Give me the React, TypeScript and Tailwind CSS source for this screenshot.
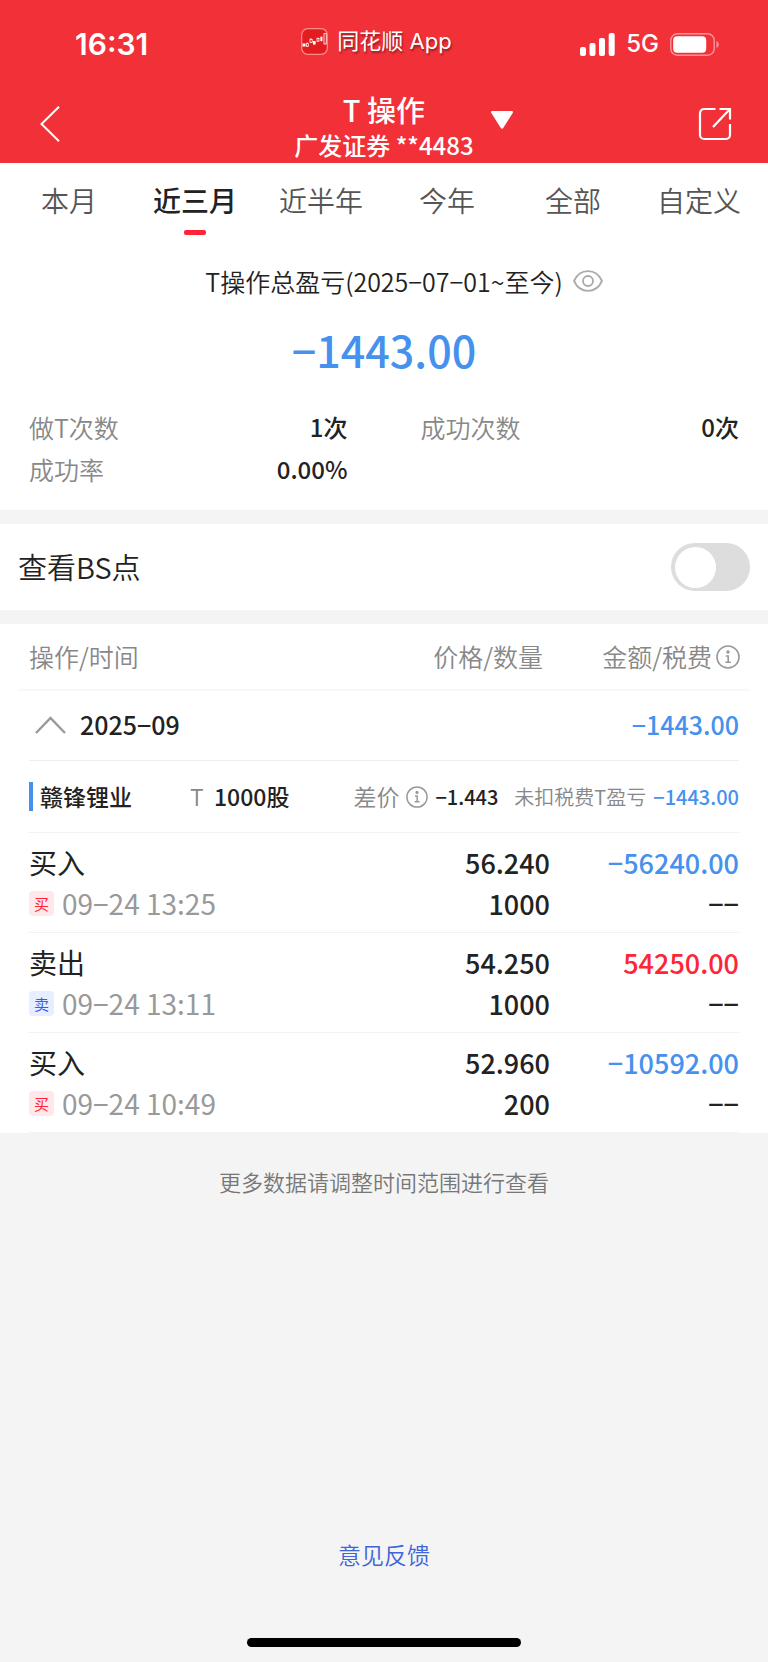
import type React from "react";
import { useState } from "react";

type Trade = {
  side: "buy" | "sell";
  time: string;
  price: string;
  amount: string;
  total: string;
  fee: string;
};

const TABS = ["本月", "近三月", "近半年", "今年", "全部", "自定义"];

const STATS = [
  { label: "做T次数", value: "1次" },
  { label: "成功次数", value: "0次" },
  { label: "成功率", value: "0.00%" },
];

const TRADES: Trade[] = [
  { side: "buy", time: "09−24 13:25", price: "56.240", amount: "1000", total: "−56240.00", fee: "−−" },
  { side: "sell", time: "09−24 13:11", price: "54.250", amount: "1000", total: "54250.00", fee: "−−" },
  { side: "buy", time: "09−24 10:49", price: "52.960", amount: "200", total: "−10592.00", fee: "−−" },
];

const InfoIcon: React.FC<{ className: string }> = ({ className }) => (
  <svg viewBox="0 0 24 24" className={className} fill="none" stroke="#999" strokeWidth="1.6" aria-hidden="true">
    <circle cx="12" cy="12" r="11" />
    <circle cx="12" cy="7" r="1.7" fill="#999" stroke="none" />
    <path d="M9.8 11h2.4v6.2M9.4 17.2h5.4" />
  </svg>
);

const StatusBar = () => (
  <div className="grid h-[84px] grid-cols-[1fr_auto_1fr] items-center pt-1 pr-[49px] pl-[34px]">
    <span className="pl-[41px] font-[Inter,sans-serif] text-[30px] leading-9 font-semibold">16:31</span>
    <div className="flex items-center gap-[9px] pb-1.5">
      <svg viewBox="0 0 27 27" className="size-[27px]" aria-hidden="true">
        <rect x="0.7" y="0.7" width="25.6" height="25.6" rx="6" fill="#e31c20" stroke="#f98d90" strokeWidth="1.2" />
        <g fill="#fff">
          <rect x="1.5" y="15.5" width="3" height="3" />
          <rect x="12" y="13" width="2.6" height="3.6" />
          <rect x="19.4" y="8.6" width="2" height="4.6" />
        </g>
        <g fill="none" stroke="#fff" strokeWidth="0.8">
          <path d="M6.3 14.5v4.5M10 10v5M17 9.5v4.5" />
          <rect x="5.3" y="15.6" width="2" height="2.6" fill="#e31c20" />
          <rect x="9" y="11.4" width="2.2" height="3" fill="#e31c20" />
          <rect x="16" y="10.4" width="2" height="2.8" fill="#e31c20" />
          <rect x="23" y="5.6" width="2.2" height="10.4" />
        </g>
      </svg>
      <span className="font-[Inter,'Noto_Sans_CJK_SC',sans-serif] text-[22px] leading-8 [text-shadow:1px_2px_2px_rgba(0,0,0,0.4)]">
        同花顺 App
      </span>
    </div>
    <div className="flex items-center justify-end gap-[11px]">
      <svg viewBox="0 0 35 23" className="h-[23px] w-[35px]" fill="#fff" aria-hidden="true">
        <rect x="0" y="14" width="6" height="9" rx="2" />
        <rect x="9.5" y="10" width="6" height="13" rx="2" />
        <rect x="19" y="5" width="6" height="18" rx="2" />
        <rect x="28.7" y="0" width="6" height="23" rx="2" />
      </svg>
      <span className="font-[Inter,sans-serif] text-2xl font-medium">5G</span>
      <svg viewBox="0 0 49 23" className="h-[23px] w-[49px]" aria-hidden="true">
        <rect x="0.8" y="0.8" width="43.4" height="21.4" rx="6.5" fill="none" stroke="#f9959a" strokeWidth="1.4" />
        <rect x="3.2" y="3.2" width="33" height="16.6" rx="4" fill="#fff" />
        <path d="M46.5 8v7c1.6-.7 2.3-2 2.3-3.500s-.7-2.800-2.300-3.500z" fill="#f9959a" />
      </svg>
    </div>
  </div>
);

const NavBar = () => (
  <div className="grid h-[79px] grid-cols-[1fr_auto_1fr] items-center">
    <button type="button" aria-label="返回" className="justify-self-start pl-10">
      <svg viewBox="0 0 20 36" className="h-9 w-5" fill="none" stroke="#fff" strokeWidth="2" aria-hidden="true">
        <path d="M19 .8 1.500 18 19 35.200" />
      </svg>
    </button>
    <h1 className="pt-1.5 text-center font-medium">
      <span className="block text-[29px] leading-9">T 操作</span>
      <span className="block text-[24px] leading-9">广发证券 **4483</span>
    </h1>
    <div className="flex items-center justify-between pr-9 pl-[17px]">
      <button type="button" aria-label="切换账户" className="pb-2">
        <svg viewBox="0 0 22 18" className="h-[18px] w-[22px]" fill="#fff" aria-hidden="true">
          <path d="M1.500 0h19c1.300 0 1.900 1 1.200 2L12.200 17c-.6 1-1.800 1-2.400 0L.3 2C-.4 1 .2 0 1.500 0z" />
        </svg>
      </button>
      <button type="button" aria-label="分享">
        <svg viewBox="0 0 34 34" className="size-[34px]" fill="none" stroke="#fff" strokeWidth="2.200" aria-hidden="true">
          <path d="M17.500 2H6a4 4 0 0 0-4 4v22a4 4 0 0 0 4 4h22a4 4 0 0 0 4-4V17" />
          <path d="M21.500 2H32v10.500M31.500 2.500 15 20" />
        </svg>
      </button>
    </div>
  </div>
);

const TradeRow: React.FC<{ trade: Trade }> = ({ trade }) => {
  const isBuy = trade.side === "buy";
  return (
    <tr className="text-[27px] leading-[41px]">
      <td className="pl-[11px]">
        <div className="border-b border-[#f2f2f2] pt-[9px] pb-2 text-[28px]">
          <div>{isBuy ? "买入" : "卖出"}</div>
          <div className="flex items-center gap-2">
            <span
              className={`size-[25px] rounded-sm text-center text-[15px] leading-[25px] ${
                isBuy ? "bg-[#ffe7ea] text-[#ff2436]" : "bg-[#e7eeff] text-[#2f5cf5]"
              }`}
            >
              {isBuy ? "买" : "卖"}
            </span>
            <span className="text-[#999]">{trade.time}</span>
          </div>
        </div>
      </td>
      <td className="text-right font-medium">
        <div className="border-b border-[#f2f2f2] pt-[9px] pb-2">
          <div>{trade.price}</div>
          <div>{trade.amount}</div>
        </div>
      </td>
      <td className="pr-[11px] text-right font-medium">
        <div className="border-b border-[#f2f2f2] pt-[9px] pb-2">
          <div className={isBuy ? "text-[#4691ee]" : "text-[#ff2436]"}>{trade.total}</div>
          <div>{trade.fee}</div>
        </div>
      </td>
    </tr>
  );
};

export default function App() {
  const [tab, setTab] = useState("近三月");
  const [showPoints, setShowPoints] = useState(false);
  const [open, setOpen] = useState(true);

  return (
    <div className="flex min-h-screen flex-col bg-[#f4f4f4] font-['Noto_Sans_CJK_SC',sans-serif] text-[#222]">
      <header className="bg-[#f23038] text-white">
        <StatusBar />
        <NavBar />
      </header>

      <main>
        <nav className="flex bg-white px-1.5">
          {TABS.map((name) => (
            <button
              key={name}
              type="button"
              onClick={() => setTab(name)}
              className="flex flex-1 flex-col items-center gap-[9px] pt-4 text-[28px] leading-[42px]"
            >
              <span className={name === tab ? "font-medium" : "font-[350] text-[#555]"}>{name}</span>
              <span className={`h-[5px] w-[22px] rounded-xs ${name === tab ? "bg-[#ff2436]" : ""}`} />
            </button>
          ))}
        </nav>

        <section className="bg-white px-[29px] pt-7 pb-5">
          <div className="flex items-center justify-center gap-[10px] pl-10 text-[25px] leading-9">
            <h2 className="font-[350]">T操作总盈亏(2025−07−01~至今)</h2>
            <button type="button" aria-label="隐藏金额">
              <svg viewBox="0 0 30 22" className="h-[22px] w-[30px]" fill="none" stroke="#aaa" strokeWidth="1.800" aria-hidden="true">
                <path d="M1 11C4 4.500 9 1.200 15 1.200S26 4.500 29 11c-3 6.500-8 9.800-14 9.800S4 17.500 1 11z" />
                <circle cx="15" cy="11" r="5" />
              </svg>
            </button>
          </div>
          <p className="pt-[18px] text-center text-[43px] leading-[64px] font-medium text-[#4691ee]">−1443.00</p>
          <dl className="grid grid-cols-2 gap-x-[73px] pt-[25px] text-[25px] leading-[42px]">
            {STATS.map((item) => (
              <div key={item.label} className="flex justify-between">
                <dt className="font-[350] text-[#888]">{item.label}</dt>
                <dd className="text-[24px] font-medium">{item.value}</dd>
              </div>
            ))}
          </dl>
        </section>

        <label className="mt-[14px] flex h-[86px] items-center justify-between bg-white px-[18px] text-[29px] font-[350]">
          查看BS点
          <input
            type="checkbox"
            role="switch"
            checked={showPoints}
            onChange={(e) => setShowPoints(e.target.checked)}
            className="flex h-12 w-[79px] appearance-none items-center rounded-full bg-[#ddd] px-1 before:size-[41px] before:rounded-full before:bg-white checked:justify-end checked:bg-[#ff2436]"
          />
        </label>

        <section className="mt-[14px] bg-white px-[18px]">
          <table className="w-full table-fixed">
            <colgroup>
              <col />
              <col className="w-[190px]" />
              <col className="w-[200px]" />
            </colgroup>
            <thead>
              <tr className="h-[66px] border-b-2 border-[#f8f8f8] text-[25px] text-[#888]">
                <th className="pl-[11px] text-left font-[350]">操作/时间</th>
                <th className="pr-[7px] text-right font-[350]">价格/数量</th>
                <th className="pr-[10px] font-[350]">
                  <div className="flex items-center justify-end gap-1 whitespace-nowrap">
                    金额/税费
                    <InfoIcon className="size-6 shrink-0" />
                  </div>
                </th>
              </tr>
            </thead>
            <tbody>
              <tr>
                <td colSpan={3} className="px-[11px]">
                  <div className="flex h-[70px] items-center justify-between border-b border-[#eee] pb-0.5 pl-[6px] text-[25px] font-medium">
                    <button type="button" className="flex items-center gap-[14px]" onClick={() => setOpen(!open)}>
                      <svg viewBox="0 0 31 18" className="h-[18px] w-[31px]" fill="none" stroke="#999" strokeWidth="2.400" aria-hidden="true">
                        <path d={open ? "M1 17 15.500 2 30 17" : "M1 1l14.500 15L30 1"} />
                      </svg>
                      2025−09
                    </button>
                    <span className="text-[#4691ee]">−1443.00</span>
                  </div>
                </td>
              </tr>
              {open && (
                <tr>
                  <td colSpan={3} className="px-[11px]">
                    <div className="flex h-[72px] items-center justify-between border-b border-[#f2f2f2] text-[23px] whitespace-nowrap">
                      <div className="flex items-center">
                        <span className="mr-[7px] h-[29px] w-1 bg-[#4691ee]" />
                        <span className="w-[150px] font-medium">赣锋锂业</span>
                        <span className="w-6 font-[350] text-[#888]">T</span>
                        <span className="font-medium">1000股</span>
                      </div>
                      <div className="flex items-center gap-[7px] text-[20px]">
                        <span className="text-[23px] font-[350] text-[#888]">差价</span>
                        <InfoIcon className="size-[22px]" />
                        <span className="mr-[9px] font-medium">−1.443</span>
                        <span className="font-[350] text-[#888]">未扣税费T盈亏</span>
                        <span className="font-medium text-[#4691ee]">−1443.00</span>
                      </div>
                    </div>
                  </td>
                </tr>
              )}
              {open && TRADES.map((trade) => <TradeRow key={trade.time} trade={trade} />)}
            </tbody>
          </table>
        </section>

        <p className="pt-[30px] text-center text-[22px] leading-9 font-[350] text-[#777]">更多数据请调整时间范围进行查看</p>
      </main>

      <footer className="mt-auto flex flex-col items-center gap-[66px] pb-[15px]">
        <a href="#feedback" className="text-[23px] leading-9 font-[350] text-[#3f66d8]">
          意见反馈
        </a>
        <div className="h-[9px] w-[274px] rounded-full bg-black" />
      </footer>
    </div>
  );
}
